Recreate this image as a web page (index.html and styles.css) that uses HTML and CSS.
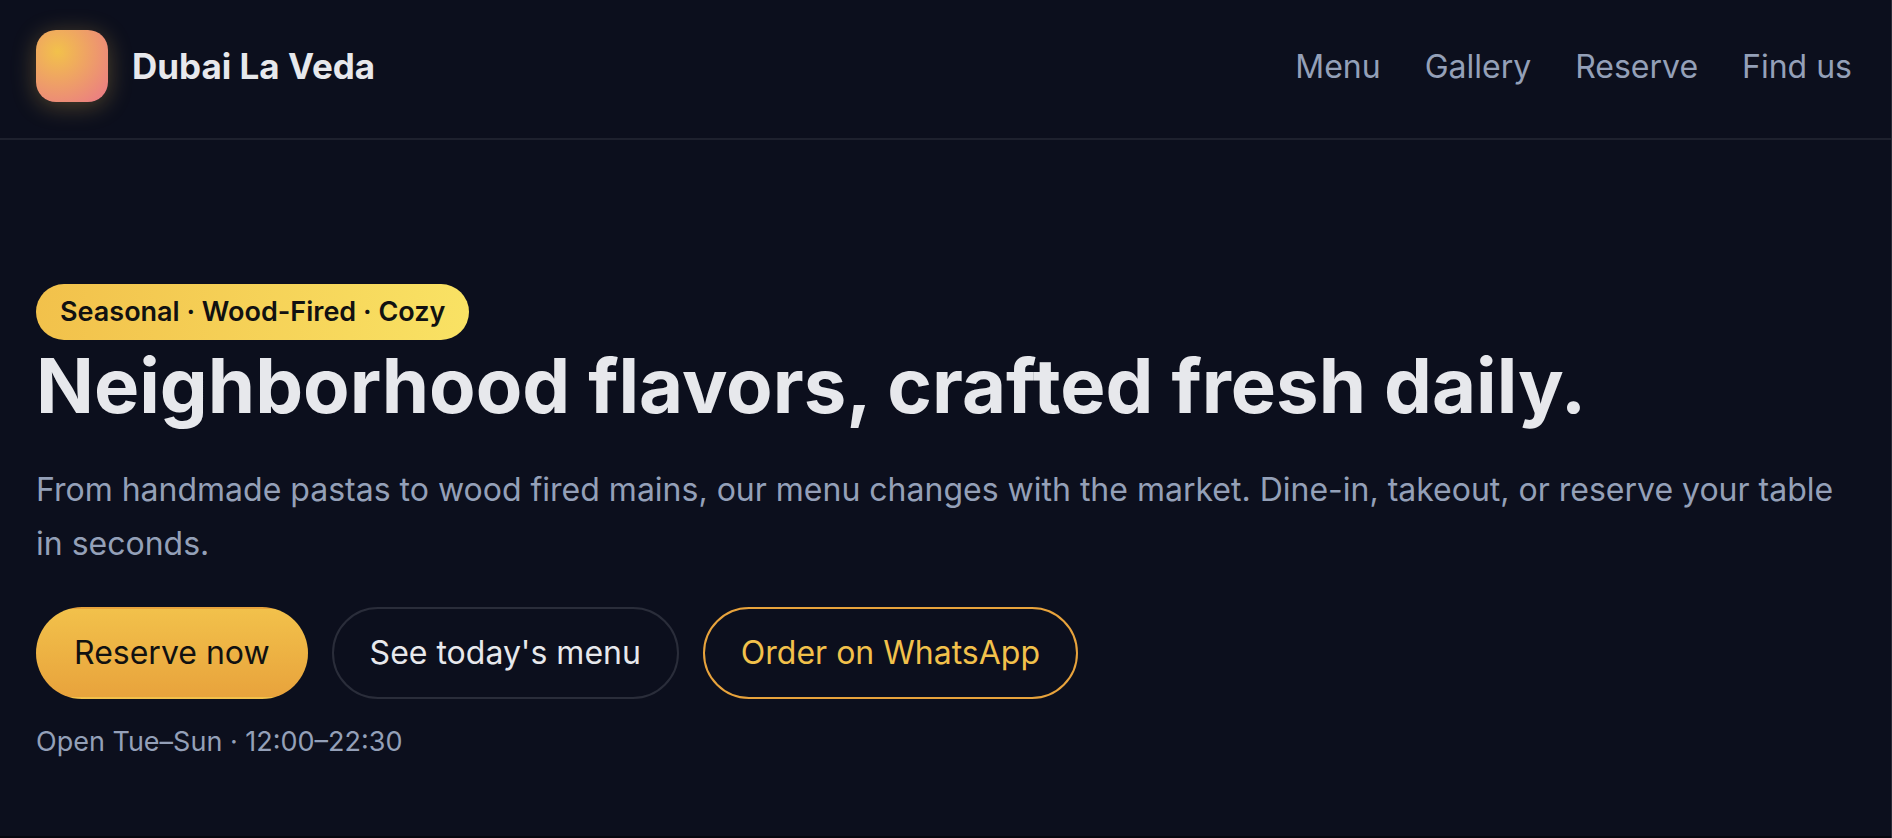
FILE: index.html
```html
<!DOCTYPE html>
<html lang="en">
<head>
    <meta charset="UTF-8">
    <meta name="viewport" content="width=device-width, initial-scale=1.0">
    <title>Dubai La Veda</title>
    <link rel="stylesheet" href="styles.css">
</head>
<body>
    <header class="site-header">
        <div class="brand">
            <div class="logo" aria-hidden="true"></div>
            <span>Dubai La Veda</span>
        </div>
        <nav class="nav">
            <a href="#menu">Menu</a>
            <a href="#gallery">Gallery</a>
            <a href="#reserve">Reserve</a>
            <a href="#find">Find us</a>
        </nav>
    </header>

    <main class="hero">
        <span class="badge">Seasonal · Wood-Fired · Cozy</span>
        <h1>Neighborhood flavors, crafted fresh daily.</h1>
        <p class="lead">From handmade pastas to wood fired mains, our menu changes with the market. Dine-in, takeout, or reserve your table in seconds.</p>
        <div class="cta">
            <button type="button" class="btn btn-primary">Reserve now</button>
            <button type="button" class="btn">See today's menu</button>
            <button type="button" class="btn btn-outline">Order on WhatsApp</button>
        </div>
        <p class="hours">Open Tue–Sun · 12:00–22:30</p>
    </main>
</body>
</html>
```
FILE: styles.css
```css
:root {
    --bg: #0c0f1d;
    --text: #e7e8ec;
    --muted: #94a0b8;
    --gold: #f2c14b;
    --amber: #e8a33c;
    --line: #1e212e;
}

* {
    box-sizing: border-box;
}

body {
    margin: 0;
    min-height: 100vh;
    display: flex;
    flex-direction: column;
    background: var(--bg);
    color: var(--text);
    font-family: Inter, sans-serif;
    font-size: 32px;
    border-right: 1px solid #2a2d38;
}

.site-header {
    display: flex;
    justify-content: space-between;
    align-items: center;
    padding: 30px 39px 36px 36px;
    border-bottom: 2px solid var(--line);
}

.brand {
    display: flex;
    align-items: center;
    gap: 24px;
    font-size: 35px;
    font-weight: 700;
    line-height: 40px;
}

.logo {
    width: 72px;
    height: 72px;
    border-radius: 20px;
    background: radial-gradient(circle at 30% 30%, #f2c14b, #ea7788);
    box-shadow: 0 4px 24px rgba(242, 193, 75, 0.3);
}

.nav {
    display: flex;
    gap: 44px;
}

.nav a {
    color: var(--muted);
    text-decoration: none;
}

.hero {
    flex: 1;
    padding: 144px 36px 64px;
    border-bottom: 2px solid #05070f;
}

.badge {
    display: block;
    width: fit-content;
    padding: 12px 24px;
    border-radius: 28px;
    background: linear-gradient(90deg, #f2c14b, #f9e264);
    color: #111;
    font-size: 27px;
    font-weight: 600;
    line-height: 32px;
}

h1 {
    margin: 0;
    font-size: 76px;
    font-weight: 700;
    line-height: 90px;
}

.lead {
    margin: 33px 0 36px;
    color: var(--muted);
    line-height: 54px;
}

.cta {
    display: flex;
    flex-wrap: wrap;
    gap: 24px;
}

.btn {
    padding: 24px 36px;
    border: 2px solid #2a2d3a;
    border-radius: 46px;
    background: transparent;
    color: var(--text);
    font: inherit;
    line-height: 40px;
    cursor: pointer;
}

/* the border is transparent so the gradient repeats under it */
.btn-primary {
    border-color: transparent;
    background: linear-gradient(180deg, var(--gold), var(--amber));
    color: #111;
}

.btn-outline {
    border-color: var(--amber);
    color: var(--gold);
}

.hours {
    margin: 21px 0 0;
    color: var(--muted);
    font-size: 27px;
    line-height: 44px;
}
```
